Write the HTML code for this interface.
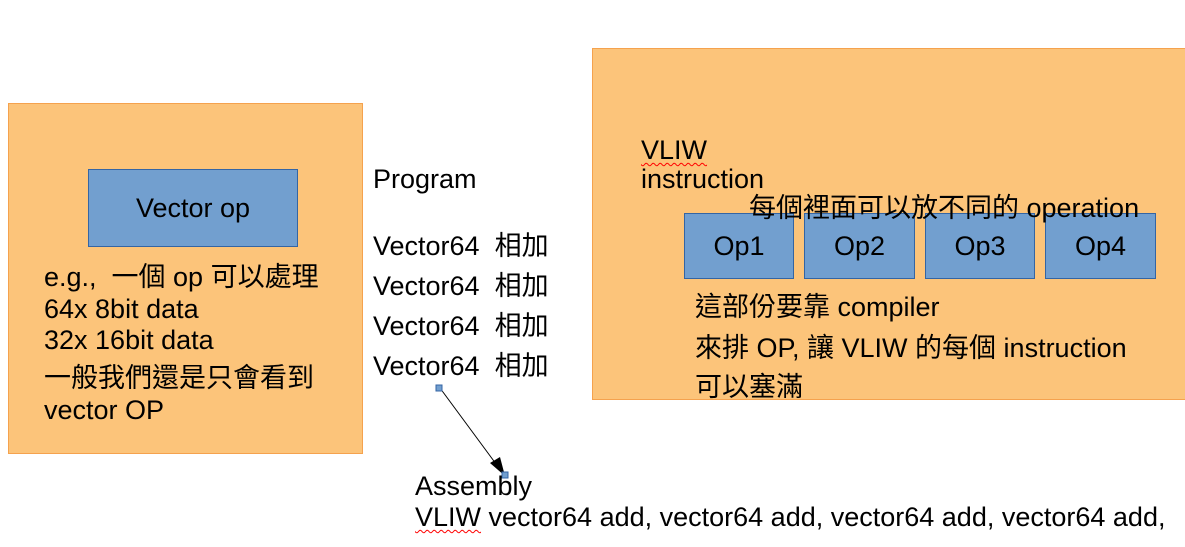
<!DOCTYPE html>
<html><head><meta charset="utf-8"><style>
body{margin:0;width:1185px;height:547px;background:#fff;position:relative;overflow:hidden;font-family:"Liberation Sans","Noto Sans CJK TC",sans-serif;font-size:27px;color:#000}
.box{position:absolute;background:#fcc47a;border:1px solid #f5a24e;box-sizing:border-box}
.blue{position:absolute;background:#729fcf;border:1px solid #3465a4;box-sizing:border-box;text-align:center}
.t{position:absolute;white-space:nowrap;line-height:30px}
.sq{text-decoration:underline wavy red;text-decoration-thickness:1px;text-underline-offset:3px}
</style></head><body>
<div class="box" style="left:8px;top:103px;width:355px;height:351px"></div>
<div class="blue" style="left:88px;top:169px;width:210px;height:78px;line-height:76px">Vector op</div>
<div class="t" style="left:44px;top:262px">e.g.,&nbsp; 一個 op 可以處理</div>
<div class="t" style="left:44px;top:294px">64x 8bit data</div>
<div class="t" style="left:44px;top:325px">32x 16bit data</div>
<div class="t" style="left:44px;top:363px">一般我們還是只會看到</div>
<div class="t" style="left:44px;top:395px">vector OP</div>

<div class="t" style="left:373px;top:164px">Program</div>
<div class="t" style="left:373px;top:231px">Vector64&nbsp; 相加</div>
<div class="t" style="left:373px;top:271px">Vector64&nbsp; 相加</div>
<div class="t" style="left:373px;top:311px">Vector64&nbsp; 相加</div>
<div class="t" style="left:373px;top:351px">Vector64&nbsp; 相加</div>

<svg style="position:absolute;left:0;top:0" width="1185" height="547">
<line x1="440" y1="388" x2="499" y2="468" stroke="#000" stroke-width="1"/>
<polygon points="505,476 490,463 500,457" fill="#000"/>
<rect x="436" y="385" width="6" height="6" fill="#729fcf" stroke="#3465a4"/>
<rect x="502" y="472" width="6" height="6" fill="#729fcf" stroke="#3465a4"/>
</svg>
<div class="t" style="left:415px;top:471px">Assembly</div>
<div class="t" style="left:415px;top:502px"><span class="sq">VLIW</span> vector64 add, vector64 add, vector64 add, vector64 add,</div>

<div class="box" style="left:592px;top:48px;width:600px;height:352px"></div>
<div class="t" style="left:641px;top:135px"><span class="sq">VLIW</span></div>
<div class="t" style="left:641px;top:164px">instruction</div>
<div class="blue" style="left:684px;top:213px;width:110px;height:66px;line-height:64px">Op1</div>
<div class="blue" style="left:804px;top:213px;width:111px;height:66px;line-height:64px">Op2</div>
<div class="blue" style="left:925px;top:213px;width:110px;height:66px;line-height:64px">Op3</div>
<div class="blue" style="left:1045px;top:213px;width:111px;height:66px;line-height:64px">Op4</div>
<div class="t" style="left:749px;top:193px">每個裡面可以放不同的 operation</div>
<div class="t" style="left:695px;top:292px">這部份要靠 compiler</div>
<div class="t" style="left:695px;top:333px">來排 OP, 讓 VLIW 的每個 instruction</div>
<div class="t" style="left:695px;top:372px">可以塞滿</div>
</body></html>
